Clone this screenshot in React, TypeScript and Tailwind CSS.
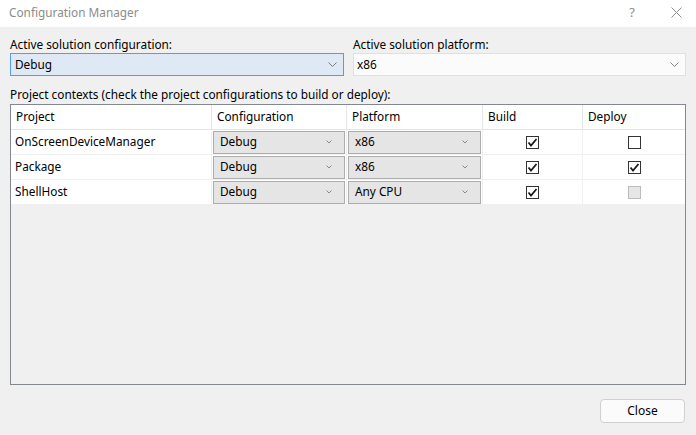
import * as React from 'react';

const font = { fontFamily: '"Segoe UI", "Noto Sans", sans-serif' };

function Chevron({ className = 'text-[#707070]' }: { className?: string }) {
  return (
    <svg width="9" height="5" viewBox="0 0 9 5" className={className}>
      <path d="M0.5 0.5 L4.5 4.5 L8.5 0.5" fill="none" stroke="currentColor" strokeWidth="0.9" />
    </svg>
  );
}

function SmallChevron() {
  return (
    <svg width="6" height="4" viewBox="0 0 6 4" className="text-[#8a8a8a]">
      <path d="M0.5 0.5 L3 3 L5.5 0.5" fill="none" stroke="currentColor" strokeWidth="1" />
    </svg>
  );
}

function CellCombo({ value }: { value: string }) {
  return (
    <div className="h-[23px] mx-[1px] flex items-center justify-between border border-[#adadad] bg-[#e5e5e5] pl-[6px] pr-[12px]">
      <span>{value}</span>
      <SmallChevron />
    </div>
  );
}

function Check({ state }: { state: 'on' | 'off' | 'disabled' }) {
  if (state === 'disabled') {
    return <div className="w-[13px] h-[13px] border border-[#bcbcbc] bg-[#e6e6e6]" />;
  }
  return (
    <div className="w-[13px] h-[13px] border border-[#333333] bg-white flex items-center justify-center">
      {state === 'on' && (
        <svg width="11" height="11" viewBox="0 0 11 11">
          <path d="M1.5 5.5 L4 8.5 L9.5 2" fill="none" stroke="#1a1a1a" strokeWidth="1.8" />
        </svg>
      )}
    </div>
  );
}

const rows = [
  { project: 'OnScreenDeviceManager', config: 'Debug', platform: 'x86', build: 'on', deploy: 'off' },
  { project: 'Package', config: 'Debug', platform: 'x86', build: 'on', deploy: 'on' },
  { project: 'ShellHost', config: 'Debug', platform: 'Any CPU', build: 'on', deploy: 'disabled' },
] as const;

export default function App() {
  return (
    <div className="w-[696px] h-[435px] bg-[#f0f0f0] text-[11.8px] text-black flex flex-col" style={font}>
      <div className="h-[27px] bg-white flex items-center pl-[9px] pr-[14px]">
        <span className="text-[#8c8c8c] flex-1 -mt-[2px]">Configuration Manager</span>
        <span className="text-[#8c8c8c] text-[13px] mr-[36px] -mt-[2px]">?</span>
        <svg width="11" height="11" viewBox="0 0 11 11" className="-mt-[2px]">
          <path d="M0.5 0.5 L10.5 10.5 M10.5 0.5 L0.5 10.5" stroke="#8c8c8c" strokeWidth="1" />
        </svg>
      </div>

      <div className="flex gap-[9px] pl-[10px] pr-[10px] mt-[8px]">
        <div className="w-[334px] flex flex-col">
          <span className="h-[18px] leading-[18px]">Active solution configuration:</span>
          <div className="h-[23px] flex items-center justify-between border border-[#569de5] bg-[#dfe9f5] pl-[4px] pr-[6px]">
            <span>Debug</span>
            <Chevron />
          </div>
        </div>
        <div className="flex-1 flex flex-col">
          <span className="h-[18px] leading-[18px]">Active solution platform:</span>
          <div className="h-[23px] flex items-center justify-between border border-[#e0e0e0] bg-[#fbfbfb] pl-[3px] pr-[6px]">
            <span>x86</span>
            <Chevron />
          </div>
        </div>
      </div>

      <div className="pl-[10px] mt-[9px] h-[19px] leading-[19px]">
        Project contexts (check the project configurations to build or deploy):
      </div>

      <div className="mx-[10px] h-[281px] border border-[#828790] bg-[#f0f0f0]">
        <div className="grid grid-cols-[201px_135px_136px_100px_1fr] h-[25px] bg-white border-b border-[#e5e5e5]">
          <div className="pl-[5px] flex items-center border-r border-[#e5e5e5]">Project</div>
          <div className="pl-[5px] flex items-center border-r border-[#e5e5e5]">Configuration</div>
          <div className="pl-[5px] flex items-center border-r border-[#e5e5e5]">Platform</div>
          <div className="pl-[5px] flex items-center border-r border-[#e5e5e5]">Build</div>
          <div className="pl-[5px] flex items-center">Deploy</div>
        </div>
        {rows.map((r) => (
          <div
            key={r.project}
            className="grid grid-cols-[201px_135px_136px_100px_1fr] h-[25px] bg-white border-b border-[#f0f0f0]"
          >
            <div className="pl-[4px] flex items-center border-r border-[#f0f0f0]">{r.project}</div>
            <div className="flex items-center border-r border-[#f0f0f0]">
              <div className="flex-1"><CellCombo value={r.config} /></div>
            </div>
            <div className="flex items-center border-r border-[#f0f0f0]">
              <div className="flex-1"><CellCombo value={r.platform} /></div>
            </div>
            <div className="flex items-center justify-center border-r border-[#f0f0f0]">
              <Check state={r.build} />
            </div>
            <div className="flex items-center justify-center">
              <Check state={r.deploy} />
            </div>
          </div>
        ))}
      </div>

      <div className="flex justify-end pr-[11px] mt-[14px]">
        <button className="w-[85px] h-[24px] border border-[#d0d0d0] rounded-[4px] bg-[#fbfbfb] text-[12px]">
          Close
        </button>
      </div>
    </div>
  );
}
